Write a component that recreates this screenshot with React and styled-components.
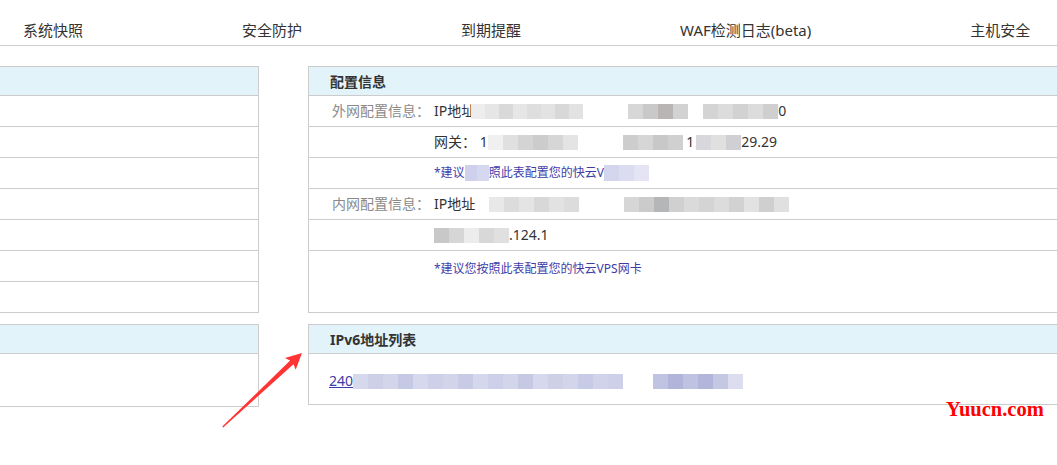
import React from "react";
import styled, { createGlobalStyle } from "styled-components";

const Global = createGlobalStyle`
  html, body { margin: 0; padding: 0; background: #fff; overflow: hidden; }
  body { font-family: "Noto Sans", "Noto Sans CJK SC", sans-serif; color: #333; }
`;

const Page = styled.div`
  position: relative;
  width: 1057px;
  height: 465px;
  overflow: hidden;
`;

const Nav = styled.nav`
  display: flex;
  gap: 159px;
  padding: 20px 0 5px 23px;
  height: 20px;
  border-bottom: 1px solid #cfcfcf;
`;

const Tab = styled.span`
  font-size: 15px;
  line-height: 20px;
  color: #333;
  white-space: nowrap;
`;

const Content = styled.div`
  display: grid;
  grid-template-columns: 459px 820px;
  column-gap: 49px;
  margin: 20px 0 0 -200px;
`;

const Column = styled.div`
  display: flex;
  flex-direction: column;
  gap: 11px;
`;

const Panel = styled.section`
  border: 1px solid #cccccc;
  background: #fff;
`;

const PanelHeader = styled.div`
  height: 28px;
  display: flex;
  align-items: center;
  padding-left: 21px;
  background: #e2f3fa;
  border-bottom: 1px solid #cccccc;
  font-size: 14px;
  font-weight: 700;
  color: #333;
`;

const Row = styled.div`
  display: flex;
  align-items: ${(p) => (p.$top ? "flex-start" : "center")};
  height: ${(p) => p.$h || (p.$last ? 30 : 31)}px;
  box-sizing: border-box;
  padding-top: ${(p) => (p.$top ? 10 : 0)}px;
  border-bottom: ${(p) => (p.$last ? "none" : "1px solid #cccccc")};
`;

const Label = styled.span`
  flex: 0 0 125px;
  box-sizing: border-box;
  padding-left: 23px;
  font-size: 14px;
  line-height: 20px;
  color: #8a8a8a;
  white-space: nowrap;
`;

const Value = styled.span`
  display: flex;
  align-items: center;
  font-size: 14px;
  line-height: 20px;
  color: #333;
  white-space: nowrap;
`;

const Note = styled.span`
  display: flex;
  align-items: center;
  font-size: 12px;
  line-height: 16px;
  color: #3d3daa;
  white-space: nowrap;
`;

const Body = styled.div`
  height: ${(p) => p.$h}px;
  display: flex;
  align-items: center;
  padding-left: 20px;
  padding-top: ${(p) => p.$pt || 0}px;
  box-sizing: border-box;
`;

const Link = styled.a`
  font-size: 14px;
  line-height: 20px;
  color: #3d3daa;
  text-decoration: underline;
`;

const MosaicWrap = styled.span`
  display: inline-flex;
  margin-left: ${(p) => p.$ml || 0}px;
  margin-right: ${(p) => p.$mr || 0}px;
  height: ${(p) => p.$h || 15}px;
`;

const Cell = styled.span`
  display: block;
  width: ${(p) => p.$w || 15}px;
  height: 100%;
`;

const Mosaic = ({ cells, ml, mr, h, w }) => (
  <MosaicWrap $ml={ml} $mr={mr} $h={h}>
    {cells.map((c, i) => (
      <Cell key={i} $w={w} style={{ background: c }} />
    ))}
  </MosaicWrap>
);

const Watermark = styled.div`
  position: absolute;
  left: 946px;
  top: 399px;
  font-family: "Liberation Serif", serif;
  font-weight: 700;
  font-size: 20.5px;
  line-height: 20px;
  color: #ff0000;
`;

const ArrowSvg = styled.svg`
  position: absolute;
  left: 0;
  top: 0;
  pointer-events: none;
`;

const tabs = ["系统快照", "安全防护", "到期提醒", "WAF检测日志(beta)", "主机安全"];

const gray1 = ["#ededed", "#e6e6e6", "#d9d9d9", "#e6e6e6", "#dedede", "#e3e3e3", "#d8d8d8", "#e2e2e2"];
const gray2 = ["#d7d7d7", "#c9c9c9", "#b9b5b5", "#d2d2d2"];
const gray3 = ["#d4d4d4", "#dcdcdc", "#d2d2d2", "#dcdcdc", "#cfcfcf"];
const blue1 = ["#d6d8ed", "#cdd0e7", "#d3d5eb", "#c6c9e4", "#d6d8ed", "#cdd0e8", "#d2d4ea", "#c8cbe5", "#d5d7ec", "#ccd0e8", "#d3d5eb", "#c6c9e4", "#d6d8ed", "#cdd0e7", "#d3d5eb", "#c8cbe5", "#d0d3e9", "#cdd0e8"];
const blue2 = ["#c0c3e1", "#b2b5da", "#bfc2e0", "#b3b6da", "#c5c8e3", "#dcdef0"];

export default function App() {
  return (
    <Page>
      <Global />
      <Nav>
        {tabs.map((t) => (
          <Tab key={t}>{t}</Tab>
        ))}
      </Nav>
      <Content>
        <Column>
          <Panel>
            <PanelHeader />
            {[0, 1, 2, 3, 4, 5, 6].map((i) => (
              <Row key={i} $last={i === 6} />
            ))}
          </Panel>
          <Panel>
            <PanelHeader />
            <Body $h={52} />
          </Panel>
        </Column>
        <Column>
          <Panel>
            <PanelHeader>配置信息</PanelHeader>
            <Row>
              <Label>外网配置信息：</Label>
              <Value>
                IP地址
                <Mosaic cells={gray1} ml={-4} w={14} />
                <Mosaic cells={gray2} ml={45} />
                <Mosaic cells={gray3} ml={15} />
                0
              </Value>
            </Row>
            <Row>
              <Label />
              <Value>
                网关：&nbsp;1
                <Mosaic cells={["#f0f0f0", "#e0e0e0", "#d4d4d4", "#cccccc", "#d6d6d6", "#e4e4e4"]} />
                <Mosaic cells={["#cdcdcd", "#d6d6d6", "#c8c8c8", "#d0d0d0"]} ml={45} />
                &nbsp;1
                <Mosaic cells={["#d8d8dc", "#e0e0e0", "#d0d0d4"]} ml={2} />
                29.29
              </Value>
            </Row>
            <Row>
              <Label />
              <Note>
                *建议
                <Mosaic cells={["#cfd1ec", "#d6d8f0"]} w={12} h={16} />
                照此表配置您的快云V
                <Mosaic cells={["#d4d6ee", "#dcdcf0", "#e4e4f4"]} h={16} />
              </Note>
            </Row>
            <Row>
              <Label>内网配置信息：</Label>
              <Value>
                IP地址
                <Mosaic cells={["#e8e8e8", "#dcdcdc", "#e4e4e4", "#d8d8d8", "#e2e2e2", "#dcdcdc"]} ml={14} />
                <Mosaic cells={["#d6d6d6", "#cbcbcb", "#b4b6b8", "#d0d0d0", "#dadada", "#d4d4d4", "#dcdcdc", "#d2d2d2", "#e2e2e2", "#cfcfcf", "#e0e0e0"]} ml={45} />
              </Value>
            </Row>
            <Row>
              <Label />
              <Value>
                <Mosaic cells={["#c8c8c8", "#d6d6d6", "#ececec", "#d8d8d8", "#e0e0e0"]} />
                .124.1
              </Value>
            </Row>
            <Row $h={61} $top $last>
              <Label />
              <Note>*建议您按照此表配置您的快云VPS网卡</Note>
            </Row>
          </Panel>
          <Panel>
            <PanelHeader>IPv6地址列表</PanelHeader>
            <Body $h={50} $pt={4}>
              <Link>240</Link>
              <Mosaic cells={blue1} w={15} />
              <Mosaic cells={blue2} ml={30} />
            </Body>
          </Panel>
        </Column>
      </Content>
      <ArrowSvg width="1057" height="465" viewBox="0 0 1057 465">
        <polygon
          points="222.3,426.6 290.1,360.6 284.9,357.9 302,353 295.7,369.7 293.5,364.2 223.2,427.4"
          fill="#ff3434"
        />
      </ArrowSvg>
      <Watermark>Yuucn.com</Watermark>
    </Page>
  );
}
